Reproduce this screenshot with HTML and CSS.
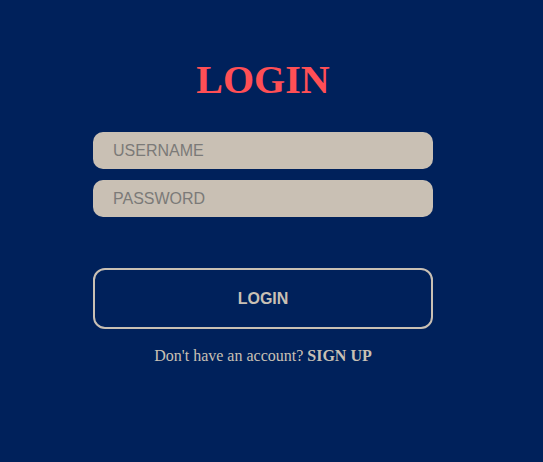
FILE: index.html
```html
<!DOCTYPE html>
<html>
<head>
<meta charset="utf-8">
<link rel="stylesheet" href="styles.css">
</head>
<body>
<main class="page">
  <form class="login-form">
    <h1 class="title">LOGIN</h1>
    <input class="field" type="text" placeholder="USERNAME">
    <input class="field" type="password" placeholder="PASSWORD">
    <button class="login-btn" type="button">LOGIN</button>
    <p class="signup">Don't have an account? <a class="signup-link" href="#">SIGN UP</a></p>
  </form>
</main>
</body>
</html>
```
FILE: styles.css
```css
html, body {
  margin: 0;
  padding: 0;
  background: #00215b;
  height: 100%;
}
.page {
  width: 526px;
  display: flex;
  justify-content: center;
}
.login-form {
  width: 340px;
  display: flex;
  flex-direction: column;
  align-items: stretch;
  padding-top: 57px;
}
.title {
  margin: 0 0 29px 0;
  text-align: center;
  font-family: "Liberation Serif", serif;
  font-weight: bold;
  font-size: 40px;
  line-height: 46px;
  color: #ff4f55;
}
.field {
  box-sizing: border-box;
  height: 37px;
  margin: 0 0 11px 0;
  padding: 0 20px;
  border: none;
  border-radius: 10px;
  background: #c9c0b4;
  font-family: "Liberation Sans", Arial, sans-serif;
  font-size: 16px;
  color: #333;
  outline: none;
}
.field::placeholder {
  color: #7b7a78;
}
.login-btn {
  box-sizing: border-box;
  height: 61px;
  margin-top: 40px;
  border: 2px solid #c9c0b4;
  border-radius: 12px;
  background: transparent;
  font-family: "Liberation Sans", Arial, sans-serif;
  font-weight: bold;
  font-size: 16px;
  color: #c9c0b4;
}
.signup {
  margin: 18px 0 0 0;
  text-align: center;
  font-family: "Liberation Serif", serif;
  font-size: 16px;
  color: #c9c0b4;
}
.signup-link {
  font-weight: bold;
  color: #c9c0b4;
  text-decoration: none;
}
```
